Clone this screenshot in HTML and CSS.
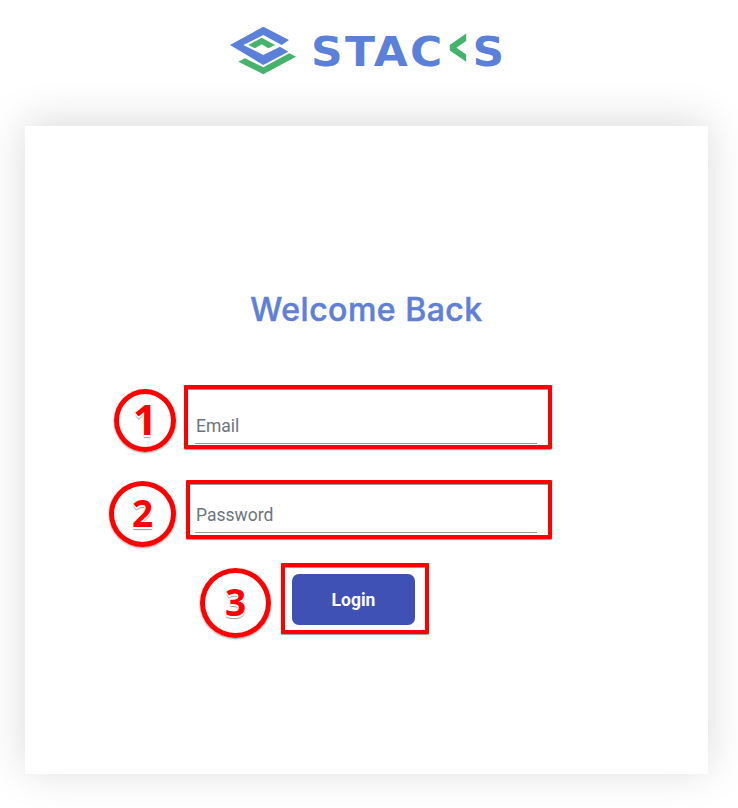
FILE: index.html
```html
<!DOCTYPE html>
<html lang="en">
<head>
    <meta charset="UTF-8">
    <meta name="viewport" content="width=device-width, initial-scale=1.0">
    <title>Stacks Login</title>
    <link rel="stylesheet" href="styles.css">
</head>
<body>
    <header class="logo">
        <svg class="logo-mark" viewBox="230 27 66 48" width="66" height="48" aria-hidden="true">
            <polygon class="mark-blue" points="263.3,26.7 289,40 281.7,45 263.3,35 243.3,45 263.3,55 280,46.7 288.3,51.7 263.3,65 230,45"/>
            <polygon class="mark-green" points="261.7,37.7 275,45 268.3,48.3 261.7,44.3 255,48.3 248.3,45"/>
            <polygon class="mark-green" points="238.3,61.7 245,58.3 263.3,67.3 289.3,53.3 296,56.7 263.3,74.3"/>
        </svg>
        <span class="logo-text">STAC<span class="logo-k">&lsaquo;</span>S</span>
    </header>

    <main class="card">
        <h2>Welcome Back</h2>
        <form class="login-form">
            <label class="field field-email">
                <input type="email" placeholder="Email">
            </label>
            <label class="field field-password">
                <input type="password" placeholder="Password">
            </label>
            <button type="submit">Login</button>
        </form>

        <!-- Annotations drawn over the form -->
        <div class="mark-box box-email"></div>
        <div class="mark-box box-password"></div>
        <div class="mark-box box-login"></div>
        <div class="step step-1">1</div>
        <div class="step step-2">2</div>
        <div class="step step-3">3</div>
    </main>
</body>
</html>
```

FILE: styles.css
```css
body {
    margin: 0;
    min-height: 808px;
    background: #fff;
    font-family: Roboto, Arial, sans-serif;
}

.logo {
    height: 126px;
    display: flex;
    align-items: flex-start;
    padding: 27px 0 0 230px;
    box-sizing: border-box;
    gap: 15px;
}

.mark-blue {
    fill: #5b80d9;
}

.mark-green {
    fill: #45b36b;
}

.logo-text {
    font-family: "DejaVu Sans", sans-serif;
    font-weight: 700;
    font-size: 40px;
    line-height: 50px;
    letter-spacing: 2px;
    color: #5b80d9;
    transform: scaleX(1.1);
    transform-origin: left center;
}

.logo-k {
    color: #45b36b;
    font-size: 62px;
    line-height: 0;
    letter-spacing: 0;
}

.card {
    position: relative;
    width: 683px;
    height: 648px;
    margin-left: 25px;
    background: #fff;
    box-shadow: 0 -4px 40px rgba(0, 0, 0, 0.15);
}

h2 {
    margin: 0;
    padding-top: 163px;
    text-align: center;
    font-family: Inter, sans-serif;
    font-weight: 500;
    font-size: 32px;
    line-height: 42px;
    letter-spacing: 0.5px;
    color: #5f7fd8;
    -webkit-text-stroke: 0.5px #5f7fd8;
}

.login-form {
    display: flex;
    flex-direction: column;
    align-items: flex-start;
    padding: 77px 0 0 170px;
}

.field {
    display: block;
    width: 342px;
}

.field-password {
    margin-top: 53px;
}

input {
    display: block;
    width: 100%;
    height: 36px;
    box-sizing: border-box;
    padding: 0 1px;
    border: none;
    border-bottom: 1px solid #999;
    outline: none;
    font-family: Roboto, Arial, sans-serif;
    font-size: 17.5px;
    color: #333;
    background: transparent;
}

input::placeholder {
    color: #6c757d;
    opacity: 1;
}

button {
    width: 123px;
    height: 51px;
    margin: 41px 0 0 97px;
    border: none;
    border-radius: 7px;
    background-color: #3f51b5;
    color: white;
    font-family: Roboto, Arial, sans-serif;
    font-weight: 700;
    font-size: 17.5px;
    cursor: pointer;
}

.mark-box {
    position: absolute;
    box-sizing: border-box;
    border: 4px solid #f00;
    border-radius: 1px;
    box-shadow: 0 1px 1px rgba(0, 0, 0, 0.4), inset 0 1px 0 rgba(0, 0, 0, 0.4);
}

.box-email {
    left: 159px;
    top: 259px;
    width: 368px;
    height: 64px;
}

.box-password {
    left: 161px;
    top: 354px;
    width: 366px;
    height: 59px;
}

.box-login {
    left: 256px;
    top: 437px;
    width: 148px;
    height: 71px;
}

.step {
    position: absolute;
    box-sizing: border-box;
    display: flex;
    align-items: center;
    justify-content: center;
    padding-bottom: 4px;
    border: 5px solid #f00;
    border-radius: 50%;
    box-shadow: 0 1px 2px rgba(0, 0, 0, 0.4);
    font-family: "Open Sans", sans-serif;
    font-weight: 700;
    font-size: 37px;
    color: #f00;
    text-shadow: -1px 0 #fff, 1px 0 #fff, 0 -1px #fff, 0 2px #fff, 0 3px 1px #999;
}

.step-1 {
    left: 89px;
    top: 263px;
    width: 62px;
    height: 63px;
    font-size: 42px;
}

.step-2 {
    left: 84px;
    top: 355px;
    width: 67px;
    height: 66px;
}

.step-3 {
    left: 175px;
    top: 442px;
    width: 71px;
    height: 70px;
}
```
